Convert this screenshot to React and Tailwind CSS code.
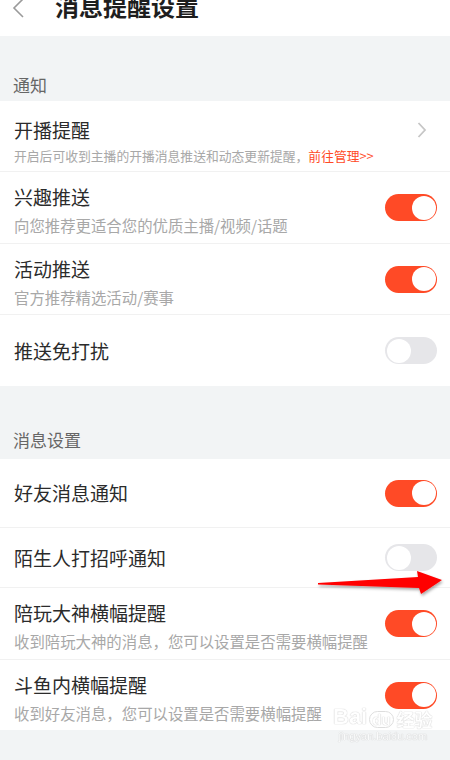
import React from 'react';

const Toggle = ({ on }) => (
    <div className={`w-[52px] h-[27px] rounded-full p-[1.5px] flex shrink-0 ${on ? 'bg-[#ff4a26] justify-end' : 'bg-[#e6e6e9] justify-start'}`}>
        <div className="w-6 h-6 rounded-full bg-white" />
    </div>
);

const Row = ({ title, sub, on, h, pt = 'pt-3', last }) => (
    <div className={`${h} flex px-[14px] pr-[13px] ${last ? '' : 'border-b border-[#f1f1f1]'} ${sub ? 'items-start' : 'items-center'}`}>
        <div className={`flex-1 flex flex-col gap-[5px] ${sub ? pt : ''}`}>
            <div className="text-[19px] leading-[26px] text-[#2b2b2b]">{title}</div>
            {sub && <div className="text-[15.4px] leading-[20px] text-[#a8a8a8]">{sub}</div>}
        </div>
        <div className="self-center">
            <Toggle on={on} />
        </div>
    </div>
);

export default function App() {
    return (
        <div className="relative w-[450px] h-[760px] overflow-hidden bg-[#f2f4f5] font-['Noto_Sans_CJK_SC',sans-serif]">
            {/* header */}
            <div className="h-9 bg-white flex items-start">
                <svg width="14" height="20" viewBox="0 0 14 20" className="ml-[11px] mt-[-2px]">
                    <polyline points="12,1 3,10 12,19" fill="none" stroke="#9a9a9a" strokeWidth="1.6" />
                </svg>
                <div className="ml-[30px] mt-[-6px] text-[24px] leading-[24px] font-bold text-[#1e1e1e]">消息提醒设置</div>
            </div>

            <div className="h-[65px] flex items-end px-[13px] pb-[4px] text-[17px] leading-[24px] text-[#666]">通知</div>

            <div className="bg-white">
                <div className="h-[71px] flex items-start px-[14px] pr-[13px] border-b border-[#f1f1f1]">
                    <div className="flex-1 flex flex-col gap-[4px] pt-[16px]">
                        <div className="text-[19px] leading-[26px] text-[#2b2b2b]">开播提醒</div>
                        <div className="text-[12.8px] leading-[18px] text-[#a8a8a8]">
                            开启后可收到主播的开播消息推送和动态更新提醒，<span className="text-[#ff4a26]">前往管理&gt;&gt;</span>
                        </div>
                    </div>
                    <svg width="10" height="16" viewBox="0 0 10 16" className="self-center mr-[10px] mt-[-12px]">
                        <polyline points="1.5,1 8,8 1.5,15" fill="none" stroke="#c6c6c6" strokeWidth="1.8" />
                    </svg>
                </div>
                <Row h="h-[72px]" title="兴趣推送" sub="向您推荐更适合您的优质主播/视频/话题" on />
                <Row h="h-[71px]" title="活动推送" sub="官方推荐精选活动/赛事" on />
                <Row h="h-[71px]" title="推送免打扰" on={false} last />
            </div>

            <div className="h-[73px] flex items-end px-[13px] pb-[7px] text-[17px] leading-[24px] text-[#666]">消息设置</div>

            <div className="bg-white">
                <Row h="h-[69px]" title="好友消息通知" on />
                <Row h="h-[60px]" title="陌生人打招呼通知" on={false} />
                <Row h="h-[72px]" title="陪玩大神横幅提醒" sub="收到陪玩大神的消息，您可以设置是否需要横幅提醒" on />
                <Row h="h-[70px]" title="斗鱼内横幅提醒" sub="收到好友消息，您可以设置是否需要横幅提醒" on last />
            </div>

            {/* annotation arrow */}
            <svg className="absolute left-0 top-0 pointer-events-none" width="450" height="760">
                <defs>
                    <filter id="sh" x="-20%" y="-50%" width="140%" height="200%">
                        <feDropShadow dx="1" dy="2" stdDeviation="1.5" floodColor="#000" floodOpacity="0.35" />
                    </filter>
                </defs>
                <polygon points="318,583 418,577 417,571 442,580 421,594 419,588 318,584.5" fill="#ff0000" filter="url(#sh)" />
            </svg>

            {/* watermark */}
            <div className="absolute left-[333px] top-[706px] flex flex-col items-center pointer-events-none select-none opacity-70">
                <div className="flex items-end leading-none text-white font-['Liberation_Sans',sans-serif] font-bold [text-shadow:0_0_1px_#b8b8b8,0_0_1px_#b8b8b8]">
                    <span className="text-[22px]">Bai</span>
                    <span className="text-[15px] ml-[2px] px-[2px] rounded-full border border-[#d0d0d0]">du</span>
                    <span className="text-[18px] ml-[3px] font-['Noto_Sans_CJK_SC',sans-serif]">经验</span>
                </div>
                <div className="text-[11px] leading-[16px] text-white font-['Liberation_Sans',sans-serif] [text-shadow:0_0_1px_#b8b8b8,0_0_1px_#b8b8b8]">jingyan.baidu.com</div>
            </div>
        </div>
    );
}
